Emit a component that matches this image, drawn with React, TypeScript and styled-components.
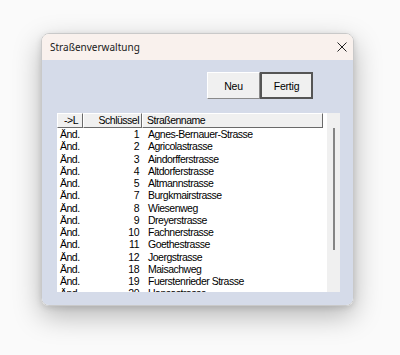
import React from 'react';
import styled, { createGlobalStyle } from 'styled-components';

const GlobalStyle = createGlobalStyle`
  html, body {
    margin: 0;
    padding: 0;
    background: #fafafa;
  }
`;

const Page = styled.div`
  width: 400px;
  height: 355px;
  padding: 33px 0 0 41px;
  box-sizing: border-box;
`;

const Window = styled.div`
  width: 313px;
  height: 273px;
  border-radius: 8px;
  overflow: hidden;
  display: flex;
  flex-direction: column;
  border: 1px solid #c9c9c9;
  box-sizing: border-box;
  box-shadow: 0 10px 28px rgba(0, 0, 0, 0.28), 0 2px 6px rgba(0, 0, 0, 0.12);
`;

const TitleBar = styled.div`
  height: 26px;
  flex-shrink: 0;
  background: #f9f1ed;
  display: flex;
  align-items: center;
  justify-content: space-between;
  padding: 0 6px 0 8px;
  font-family: 'Noto Sans', 'Open Sans', sans-serif;
  font-size: 10px;
  color: #1a1a1a;
`;

const CloseIcon = styled.svg`
  width: 10px;
  height: 10px;
`;

const Body = styled.div`
  flex: 1;
  background: #d5dbe9;
  display: flex;
  flex-direction: column;
  padding: 12px 0 0 15px;
  font-family: 'Liberation Sans', Arial, sans-serif;
  font-size: 10.5px;
  letter-spacing: -0.5px;
  color: #000;
`;

const ButtonRow = styled.div`
  display: flex;
  justify-content: flex-end;
  padding-right: 40px;
`;

const Button = styled.div<{ $default?: boolean }>`
  width: 53px;
  height: 27px;
  box-sizing: border-box;
  display: flex;
  align-items: center;
  justify-content: center;
  background: #f0f0f0;
  border: ${(p) => (p.$default ? '2px solid #555' : '1px solid #fff')};
  border-right-color: ${(p) => (p.$default ? '#555' : '#8a8a8a')};
  border-bottom-color: ${(p) => (p.$default ? '#555' : '#8a8a8a')};
  letter-spacing: -0.2px;
`;

const ListBox = styled.div`
  margin-top: 14px;
  width: 283px;
  height: 179px;
  display: flex;
  background: #fff;
  overflow: hidden;
`;

const Table = styled.div`
  width: 270px;
  display: flex;
  flex-direction: column;
`;

const Cols = styled.div`
  display: grid;
  grid-template-columns: 26px 59px 181px;
`;

const HeaderCell = styled.div<{ $align: string }>`
  height: 15px;
  box-sizing: border-box;
  background: #f0f0f0;
  border-top: 1px solid #fff;
  border-left: 1px solid #fff;
  border-right: 1px solid #6a6a6a;
  border-bottom: 1px solid #6a6a6a;
  line-height: 13px;
  text-align: ${(p) => p.$align};
  padding: 0 2px 0 4px;
  white-space: nowrap;
`;

const Cell = styled.div<{ $align: string; $pad: string }>`
  height: 12.25px;
  line-height: 12.25px;
  text-align: ${(p) => p.$align};
  padding: ${(p) => p.$pad};
  white-space: nowrap;
`;

const ScrollStrip = styled.div`
  width: 13px;
  background: #f0f0f0;
  display: flex;
  justify-content: center;
  padding-top: 15px;
  box-sizing: border-box;
`;

const Thumb = styled.div`
  width: 2px;
  height: 122px;
  background: #858585;
`;

const rows: [number, string][] = [
  [1, 'Agnes-Bernauer-Strasse'],
  [2, 'Agricolastrasse'],
  [3, 'Aindorfferstrasse'],
  [4, 'Altdorferstrasse'],
  [5, 'Altmannstrasse'],
  [7, 'Burgkmairstrasse'],
  [8, 'Wiesenweg'],
  [9, 'Dreyerstrasse'],
  [10, 'Fachnerstrasse'],
  [11, 'Goethestrasse'],
  [12, 'Joergstrasse'],
  [18, 'Maisachweg'],
  [19, 'Fuerstenrieder Strasse'],
  [20, 'Hansastrasse'],
];

const App = () => {
  return (
    <Page>
      <GlobalStyle />
      <Window>
        <TitleBar>
          <span>Straßenverwaltung</span>
          <CloseIcon viewBox="0 0 10 10">
            <path d="M0.5 0.5 L9.5 9.5 M9.5 0.5 L0.5 9.5" stroke="#222" strokeWidth="1" />
          </CloseIcon>
        </TitleBar>
        <Body>
          <ButtonRow>
            <Button>Neu</Button>
            <Button $default>Fertig</Button>
          </ButtonRow>
          <ListBox>
            <Table>
              <Cols>
                <HeaderCell $align="center">-&gt;L</HeaderCell>
                <HeaderCell $align="right">Schlüssel</HeaderCell>
                <HeaderCell $align="left">Straßenname</HeaderCell>
              </Cols>
              {rows.map(([key, name]) => (
                <Cols key={key}>
                  <Cell $align="left" $pad="0 0 0 3px">Änd.</Cell>
                  <Cell $align="right" $pad="0 3px 0 0">{key}</Cell>
                  <Cell $align="left" $pad="0 0 0 6px">{name}</Cell>
                </Cols>
              ))}
            </Table>
            <ScrollStrip>
              <Thumb />
            </ScrollStrip>
          </ListBox>
        </Body>
      </Window>
    </Page>
  );
};

export default App;
